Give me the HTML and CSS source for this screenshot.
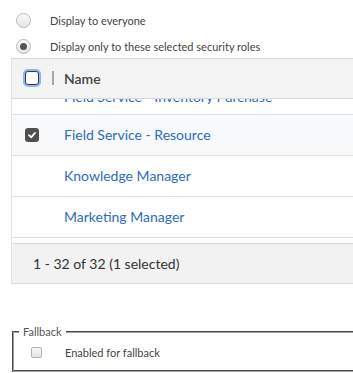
FILE: index.html
```html
<!DOCTYPE html>
<html lang="en">
<head>
    <meta charset="UTF-8">
    <meta name="viewport" content="width=device-width, initial-scale=1.0">
    <title>Security Roles</title>
    <link rel="stylesheet" href="styles.css">
</head>
<body>

<div class="visibility">
    <label class="radio-row">
        <span class="radio"></span>
        <span class="radio-label">Display to everyone</span>
    </label>
    <label class="radio-row">
        <span class="radio checked"></span>
        <span class="radio-label">Display only to these selected security roles</span>
    </label>
</div>

<div class="grid">
    <div class="grid-header">
        <span class="box focused"></span>
        <span class="divider"></span>
        <span class="col-name">Name</span>
    </div>
    <div class="grid-body">
        <!-- first row is partly scrolled out of view -->
        <div class="grid-row partial">
            <span class="cell-check"></span>
            <a class="role-link">Field Service - Inventory Purchase</a>
        </div>
        <div class="grid-row selected">
            <span class="cell-check">
                <span class="box checked">
                    <svg width="10" height="10" viewBox="0 0 10 10"><path d="M2 5.2 L4.2 7.3 L8 2.9" fill="none" stroke="#fff" stroke-width="1.8" stroke-linecap="round" stroke-linejoin="round"/></svg>
                </span>
            </span>
            <a class="role-link">Field Service - Resource</a>
        </div>
        <div class="grid-row">
            <span class="cell-check"></span>
            <a class="role-link">Knowledge Manager</a>
        </div>
        <div class="grid-row">
            <span class="cell-check"></span>
            <a class="role-link">Marketing Manager</a>
        </div>
    </div>
    <div class="grid-footer">1 - 32 of 32 (1 selected)</div>
</div>

<fieldset class="fallback">
    <legend>Fallback</legend>
    <label class="fallback-row">
        <span class="small-box"></span>
        <span class="fallback-label">Enabled for fallback</span>
    </label>
</fieldset>

</body>
</html>
```

FILE: styles.css
```css
body {
    margin: 0;
    font-family: "Segoe UI", Lato, "Open Sans", sans-serif;
    color: #444;
    overflow: hidden;
}

/* Radio options at the top */
.visibility {
    box-sizing: border-box;
    height: 58px;
    padding: 7px 0 0 16px;
}

.radio-row {
    display: flex;
    align-items: center;
    height: 26px;
    font-size: 11px;
}

.radio {
    box-sizing: border-box;
    width: 15px;
    height: 15px;
    border: 1px solid #b9b9b9;
    border-radius: 50%;
    background: linear-gradient(#fbfbfb, #e4e4e4);
    display: flex;
    align-items: center;
    justify-content: center;
}

.radio.checked::after {
    content: "";
    width: 7px;
    height: 7px;
    border-radius: 50%;
    background-color: #555;
}

.radio-label {
    margin-left: 19px;
    color: #444;
}

/* Grid */
.grid {
    margin-left: 11px;
    width: 420px;
    border-left: 1px solid #e2e2e2;
}

.grid-header {
    display: flex;
    align-items: center;
    height: 38px;
    padding: 0 0 1px 13px;
    background-color: #f3f3f3;
    border-top: 1px solid #dadada;
    border-bottom: 1px solid #dadada;
}

.box {
    box-sizing: border-box;
    width: 14px;
    height: 14px;
    border-radius: 3px;
    display: flex;
    align-items: center;
    justify-content: center;
}

.box.focused {
    border: 1px solid #3c3c3c;
    background-color: #fff;
    box-shadow: 0 0 0 2px #8cb6f4;
}

.box.checked {
    background-color: #505050;
}

.divider {
    width: 2px;
    height: 14px;
    margin-left: 13px;
    background-color: #a6a6a6;
}

.col-name {
    margin-left: 10px;
    font-size: 14px;
    font-weight: 600;
    color: #444;
}

.grid-body {
    height: 139px;
    overflow: hidden;
    display: flex;
    flex-direction: column;
    justify-content: flex-end;
}

.grid-row {
    flex-shrink: 0;
    display: flex;
    align-items: center;
    height: 39px;
    padding: 0 0 1px 13px;
    border-bottom: 1px solid #e0e0e0;
}

.grid-row.partial {
    height: 36px;
    padding: 4px 0 0 13px;
}

.grid-row.selected {
    background-color: #f8f9fb;
}

.cell-check {
    width: 39px;
    display: flex;
}

.role-link {
    font-size: 14px;
    color: #2d6cc0;
    cursor: pointer;
}

.grid-footer {
    display: flex;
    align-items: center;
    height: 38px;
    margin-top: 5px;
    padding: 0 0 1px 21px;
    font-size: 14px;
    color: #333;
    background-color: #f2f2f2;
    border-top: 1px solid #dadada;
    border-bottom: 1px solid #dadada;
}

/* Fallback group */
.fallback {
    width: 400px;
    margin: 41px 0 0 12px;
    padding: 0 0 10px 5px;
    border: 2px groove #a0a0a0;
}

.fallback legend {
    padding: 0 4px;
    font-size: 11px;
    color: #555;
}

.fallback-row {
    display: flex;
    align-items: center;
    height: 16px;
    margin: 6px 0 0 12px;
    font-size: 11px;
}

.small-box {
    box-sizing: border-box;
    width: 11px;
    height: 11px;
    border: 1px solid #b0b0b0;
    border-radius: 2px;
    background: linear-gradient(#fafafa, #e2e2e2);
}

.fallback-label {
    margin-left: 23px;
    color: #444;
}
```
